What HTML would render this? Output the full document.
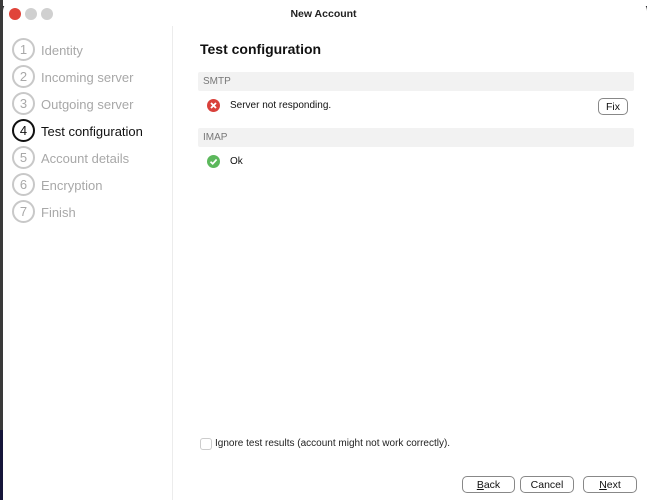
<!DOCTYPE html>
<html style="overflow:hidden;height:500px"><head><meta charset="utf-8"><style>
*{margin:0;padding:0;box-sizing:border-box}
body{width:647px;height:500px;overflow:hidden;background:#2a2a2e;font-family:"Liberation Sans",sans-serif;position:relative}
.win{position:absolute;left:3px;top:1px;width:644px;height:499px;background:#fff;border-radius:10px 10px 0 0}
.bg1{position:absolute;left:0;top:0;width:647px;height:6px;background:#fff;}
.abs{position:absolute}
.dot{position:absolute;width:12px;height:12px;border-radius:50%;top:8px}
.side{position:absolute;left:3px;top:26px;width:170px;height:474px;border-right:1px solid #ececec;background:#fff}
.step{position:absolute;left:12px;height:24px;font-size:13px;color:#a8a8a8;line-height:24px}
.step .c{position:absolute;left:0;top:0;width:23px;height:23px;border:2px solid #c8c8c8;border-radius:50%;text-align:center;line-height:19px;font-size:13px;color:#a8a8a8}
.step .t{position:absolute;left:29px;top:1px;white-space:nowrap}
.bar{position:absolute;left:198px;width:436px;height:19px;background:#f2f2f2;font-size:10px;color:#777;padding-left:5px;line-height:20px;border-radius:2px}
.btn{position:absolute;top:476px;height:17px;border:1px solid #888;border-radius:5px;font-size:10.5px;text-align:center;line-height:16px;color:#111;background:#fff}
</style></head><body>
<div class="bg1"></div>
<div class="win"></div>
<div class="abs" style="left:0;top:0;width:3px;height:500px;background:#3a3a3a"></div>
<div class="abs" style="left:0;top:430px;width:3px;height:70px;background:#16163a"></div>
<div class="dot" style="left:9px;background:#e0443a"></div>
<div class="dot" style="left:25px;background:#d0d0d0"></div>
<div class="dot" style="left:41px;background:#d0d0d0"></div>
<div class="abs" style="left:0;top:8px;width:647px;text-align:center;font-size:10.5px;font-weight:bold;color:#222">New Account</div>
<div class="side"></div>
<div class="step" style="top:38px"><div class="c">1</div><div class="t">Identity</div></div>
<div class="step" style="top:65px"><div class="c">2</div><div class="t">Incoming server</div></div>
<div class="step" style="top:92px"><div class="c">3</div><div class="t">Outgoing server</div></div>
<div class="step" style="top:119px;color:#111"><div class="c" style="border-color:#111;color:#111">4</div><div class="t">Test configuration</div></div>
<div class="step" style="top:146px"><div class="c">5</div><div class="t">Account details</div></div>
<div class="step" style="top:173px"><div class="c">6</div><div class="t">Encryption</div></div>
<div class="step" style="top:200px"><div class="c">7</div><div class="t">Finish</div></div>
<div class="abs" style="left:200px;top:41px;font-size:14px;font-weight:bold;color:#111">Test configuration</div>
<div class="bar" style="top:72px">SMTP</div>
<svg class="abs" style="left:207px;top:99px" width="13" height="13" viewBox="0 0 13 13"><circle cx="6.5" cy="6.5" r="6.5" fill="#d9413b"/><path d="M4 4L9 9M9 4L4 9" stroke="#fff" stroke-width="1.8"/></svg>
<div class="abs" style="left:230px;top:100px;font-size:10px;color:#111">Server not responding.</div>
<div class="btn" style="left:598px;top:98px;width:30px">Fix</div>
<div class="bar" style="top:128px">IMAP</div>
<svg class="abs" style="left:207px;top:155px" width="13" height="13" viewBox="0 0 13 13"><circle cx="6.5" cy="6.5" r="6.5" fill="#5cb85c"/><path d="M3.5 6.7L5.7 8.8L9.6 4.5" stroke="#fff" stroke-width="1.7" fill="none"/></svg>
<div class="abs" style="left:230px;top:156px;font-size:10px;color:#111">Ok</div>
<div class="abs" style="left:200px;top:438px;width:12px;height:12px;border:1px solid #ccc;border-radius:3px"></div>
<div class="abs" style="left:215px;top:438px;font-size:10px;color:#222">Ignore test results (account might not work correctly).</div>
<div class="btn" style="left:462px;width:53px"><u>B</u>ack</div>
<div class="btn" style="left:520px;width:54px">Cancel</div>
<div class="btn" style="left:583px;width:54px"><u>N</u>ext</div>
</body></html>
